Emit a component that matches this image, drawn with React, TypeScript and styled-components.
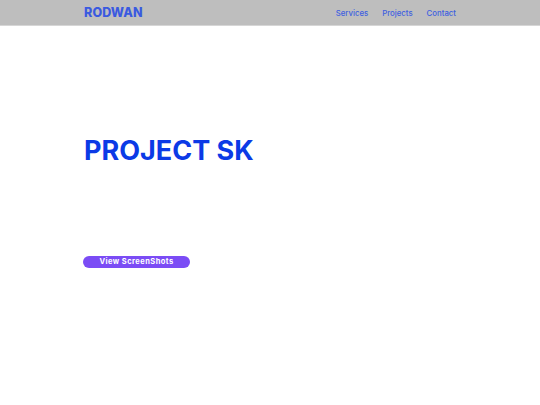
import React from 'react';
import styled, {createGlobalStyle} from "styled-components";

const GlobalStyle = createGlobalStyle`
    body {
        margin: 0;
        background: #ffffff;
        font-family: "Inter", "Noto Sans", sans-serif;
    }
`

const navLinks = ['Services', 'Projects', 'Contact'];

export default function App() {
    return (
        <>
            <GlobalStyle/>
            <Header>
                <Container>
                    <HeaderRow>
                        <Logo>RODWAN</Logo>
                        <NavList>
                            {navLinks.map(link => (
                                <NavItem key={link}>
                                    <NavLink href="#">{link}</NavLink>
                                </NavItem>
                            ))}
                        </NavList>
                    </HeaderRow>
                </Container>
            </Header>

            <Hero>
                <Container>
                    <Title>PROJECT SK</Title>
                    <ScreenshotsButton>View ScreenShots</ScreenshotsButton>
                </Container>
            </Hero>
        </>
    );
}

const Container = styled.div`
    width: 372px;
    margin: 0 auto;
`

const Header = styled.header`
    background-color: #bebebe;
    height: 25px;
    border-bottom: 1px solid #d6d6d6;
`

const HeaderRow = styled.div`
    display: flex;
    justify-content: space-between;
    align-items: center;
    height: 25px;
`

const Logo = styled.div`
    font-size: 12.5px;
    font-weight: 800;
    color: #3a5ae0;
    letter-spacing: 0.1px;
    line-height: 14px;
`

const NavList = styled.ul`
    display: flex;
    align-items: center;
    list-style-type: none;
    gap: 14px;
    margin: 0;
    padding: 0;
    line-height: 10px;
`

const NavItem = styled.li`
    display: flex;
`

const NavLink = styled.a`
    font-size: 7.8px;
    font-weight: 500;
    line-height: 10px;
    color: #3d5ee0;
    text-decoration: none;
`

const Hero = styled.main`
    padding-top: 109px;
`

const Title = styled.h1`
    margin: 0;
    font-size: 27px;
    font-weight: 700;
    color: #0b3ae6;
    line-height: 32px;
`

const ScreenshotsButton = styled.button`
    display: block;
    margin-top: 89px;
    margin-left: -1px;
    width: 107px;
    height: 12px;
    padding: 0;
    border: none;
    border-radius: 6px;
    background-color: #7b4cf5;
    color: #ffffff;
    font-family: "Inter", "Noto Sans", sans-serif;
    font-size: 7.5px;
    font-weight: 700;
    letter-spacing: 0.45px;
    line-height: 12px;
`
